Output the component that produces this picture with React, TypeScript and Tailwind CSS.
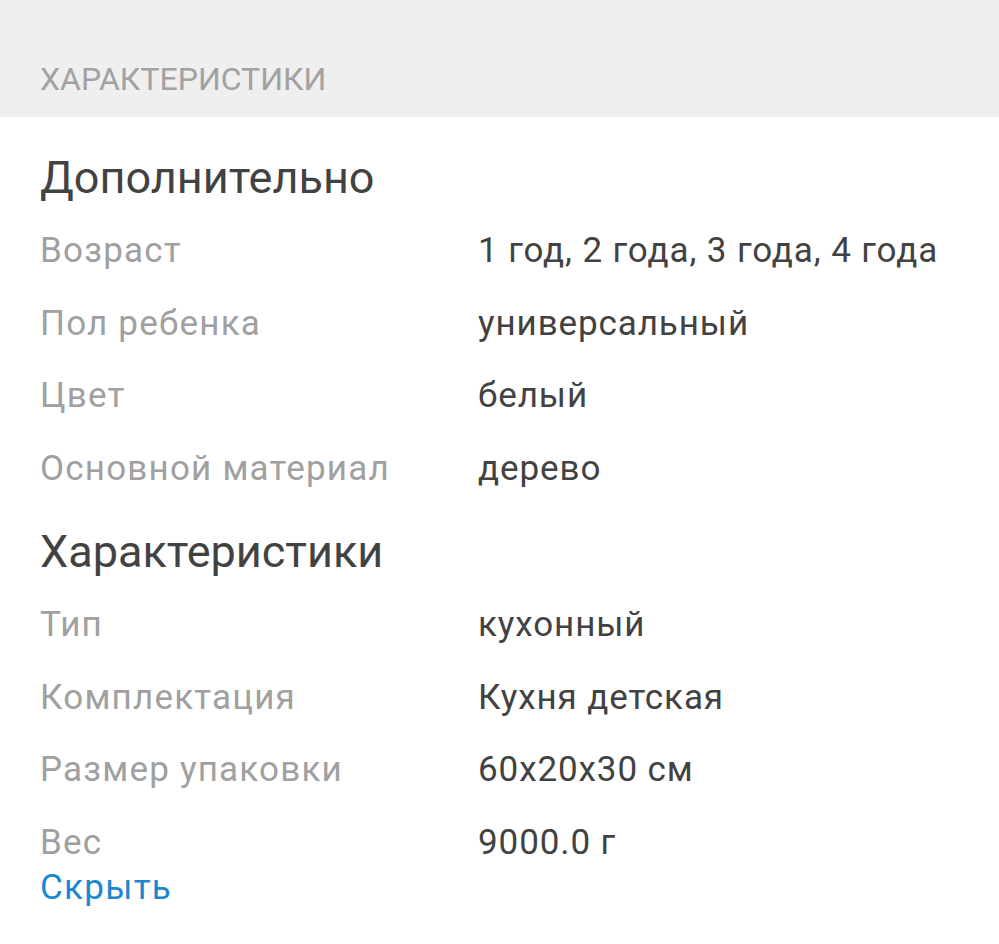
import React from "react";

const groups: { title: string; rows: [string, string][] }[] = [
  {
    title: "Дополнительно",
    rows: [
      ["Возраст", "1 год, 2 года, 3 года, 4 года"],
      ["Пол ребенка", "универсальный"],
      ["Цвет", "белый"],
      ["Основной материал", "дерево"],
    ],
  },
  {
    title: "Характеристики",
    rows: [
      ["Тип", "кухонный"],
      ["Комплектация", "Кухня детская"],
      ["Размер упаковки", "60x20x30 см"],
      ["Вес", "9000.0 г"],
    ],
  },
];

export default function App() {
  return (
    <div
      className="w-[999px] h-[944px] bg-white overflow-hidden"
      style={{ fontFamily: "Roboto, 'Noto Sans', sans-serif" }}
    >
      <div className="h-[117px] bg-[#efefef] pl-10 pt-[59px]">
        <div className="text-[32px] leading-[40px] text-[#a2a2a2]">ХАРАКТЕРИСТИКИ</div>
      </div>
      <div className="pl-10 pt-[34.5px]">
        {groups.map((g, gi) => (
          <div key={g.title} className={gi > 0 ? "mt-[37px]" : ""}>
            <div className="text-[45px] leading-[52px] text-[#424242]">{g.title}</div>
            <div className="mt-[27.5px] flex flex-col gap-[32.5px]">
              {g.rows.map(([k, v]) => (
                <div
                  key={k}
                  className="grid grid-cols-[438px_1fr] text-[35px] leading-[40px]"
                >
                  <span className="text-[#a0a0a0] tracking-[1.2px]">{k}</span>
                  <span className="text-[#424242] tracking-[0.9px]">{v}</span>
                </div>
              ))}
            </div>
          </div>
        ))}
        <div className="mt-[5.5px] text-[35px] leading-[40px] tracking-[1.3px] text-[#1a88d0]">
          Скрыть
        </div>
      </div>
    </div>
  );
}
